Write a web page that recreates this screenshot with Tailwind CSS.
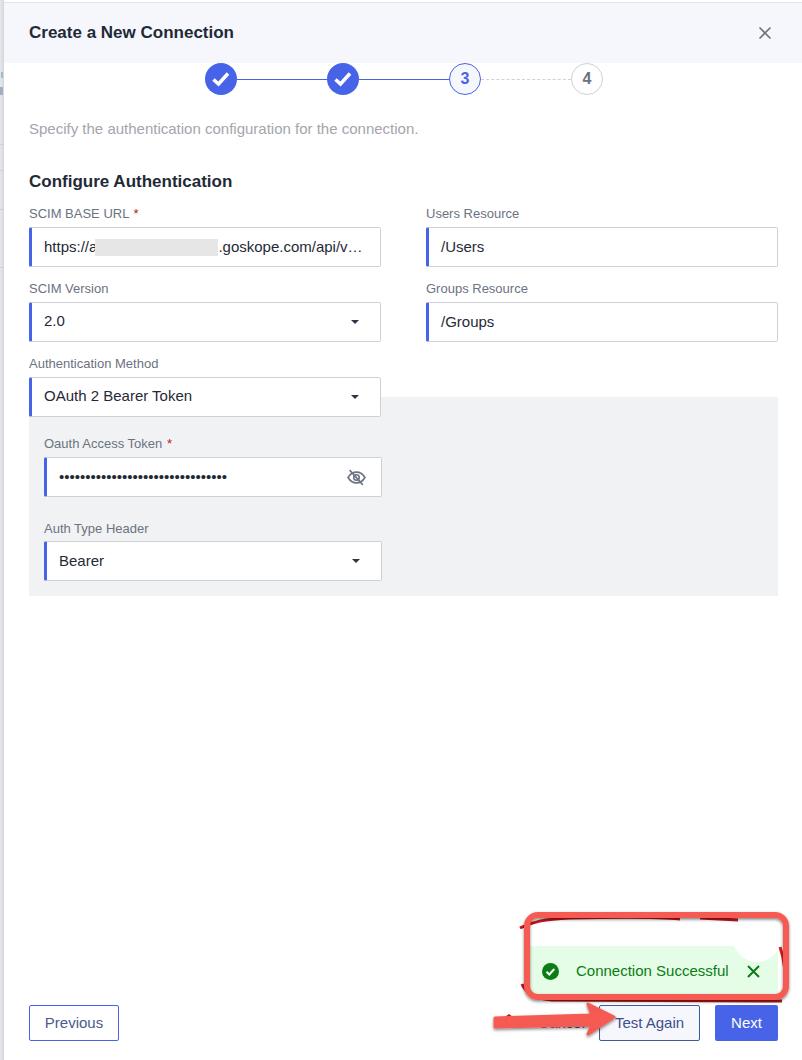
<!DOCTYPE html>
<html lang="en">
<head>
  <meta charset="UTF-8" />
  <title>Create a New Connection</title>
  <script src="https://cdn.jsdelivr.net/npm/@tailwindcss/browser@4"></script>
</head>
<body class="bg-white font-['Liberation_Sans',Arial,sans-serif] overflow-hidden">
  <div class="relative w-[802px] h-[1060px] overflow-hidden">
    <div class="flex h-full">
      <!-- page behind the drawer -->
      <div class="w-[4px] h-full bg-linear-to-r from-[#e6e7ea] to-[#d6d7dd] shrink-0 flex flex-col items-start pt-[72px]">
        <div class="ml-[1px] w-[2px] h-[6px] bg-[#9dbad0]"></div>
        <div class="mt-[9px] w-[3px] h-[8px] bg-[#a3aebf]"></div>
        <div class="mt-[49px] w-full h-px bg-[#cfd0d5]"></div>
        <div class="mt-[25px] w-full h-px bg-[#cfd0d5]"></div>
        <div class="mt-[38px] w-full h-px bg-[#cfd0d5]"></div>
        <div class="mt-[57px] w-full h-px bg-[#cfd0d5]"></div>
      </div>

      <div class="flex-1 flex flex-col pt-[2px] relative">
        <header class="h-[61px] shrink-0 bg-[#f6f7fc] border-t border-[#e3e4ea] flex items-center justify-between pl-[25px] pr-[30px]">
          <h2 class="text-[17px] font-bold text-[#1f2a37]">Create a New Connection</h2>
          <svg class="w-[14px] h-[14px] text-[#6b7280]" viewBox="0 0 14 14" fill="none" stroke="currentColor" stroke-width="1.6"><path d="M1.5 1.5l11 11M12.5 1.5l-11 11"/></svg>
        </header>

        <!-- stepper -->
        <div class="flex items-center justify-start pl-[201px] h-[32px] shrink-0">
          <div class="w-[32px] h-[32px] rounded-full bg-[#4764e9] flex items-center justify-center">
            <svg class="w-[18px] h-[16px]" viewBox="0 0 18 16" fill="none" stroke="#fff" stroke-width="3.500"><path d="M1.500 8.500l5 4.500L16 2.500"/></svg>
          </div>
          <div class="w-[90px] h-px bg-[#4764e9]"></div>
          <div class="w-[32px] h-[32px] rounded-full bg-[#4764e9] flex items-center justify-center">
            <svg class="w-[18px] h-[16px]" viewBox="0 0 18 16" fill="none" stroke="#fff" stroke-width="3.500"><path d="M1.500 8.500l5 4.500L16 2.500"/></svg>
          </div>
          <div class="w-[90px] h-px bg-[#4764e9]"></div>
          <div class="w-[32px] h-[32px] rounded-full border border-[#4764e9] bg-[#f6f7fc] flex items-center justify-center text-[16px] font-bold text-[#4764e9]">3</div>
          <div class="w-[90px] border-t border-dashed border-[#cfd1d6]"></div>
          <div class="w-[32px] h-[32px] rounded-full border border-[#cfd1d6] bg-white flex items-center justify-center text-[16px] font-bold text-[#6b7280]">4</div>
        </div>

        <div class="flex-1 pl-[25px] pr-[24px]">
          <p class="mt-[25px] text-[15px] leading-[18px] text-[#a3a6ad]">Specify the authentication configuration for the connection.</p>
          <h3 class="mt-[34px] text-[17px] leading-[20px] font-bold text-[#1f2a37]">Configure Authentication</h3>

          <div class="mt-[15px] grid grid-cols-[352px_352px] gap-x-[45px] gap-y-[15px]">
            <div>
              <label class="block h-[20px] text-[13px] leading-[13px] text-[#6b7280]">SCIM BASE URL <span class="ml-[1px] text-[#b42318]">*</span></label>
              <div class="h-[40px] bg-white border border-[#cfd1d6] border-l-[3px] border-l-[#4764e9] rounded-[2px] pl-[12px] flex items-center text-[15px] text-[#1f2a37]">https://a<span class="-ml-[2px] w-[123px] h-[17px] bg-[#e6e6e6] shrink-0"></span>.goskope.com/api/v…</div>
            </div>
            <div>
              <label class="block h-[20px] text-[13px] leading-[13px] text-[#6b7280]">Users Resource</label>
              <div class="h-[40px] bg-white border border-[#cfd1d6] border-l-[3px] border-l-[#4764e9] rounded-[2px] pl-[12px] flex items-center text-[15px] text-[#1f2a37]">/Users</div>
            </div>
            <div>
              <label class="block h-[20px] text-[13px] leading-[13px] text-[#6b7280]">SCIM Version</label>
              <div class="h-[40px] bg-white border border-[#cfd1d6] border-l-[3px] border-l-[#4764e9] rounded-[2px] pl-[12px] pr-[21px] pb-[1px] flex items-center justify-between text-[15px] text-[#1f2a37]">2.0<span class="w-0 h-0 mt-[1px] border-x-[4px] border-x-transparent border-t-[4px] border-t-[#2c3644]"></span></div>
            </div>
            <div>
              <label class="block h-[20px] text-[13px] leading-[13px] text-[#6b7280]">Groups Resource</label>
              <div class="h-[40px] bg-white border border-[#cfd1d6] border-l-[3px] border-l-[#4764e9] rounded-[2px] pl-[12px] flex items-center text-[15px] text-[#1f2a37]">/Groups</div>
            </div>
            <div class="relative z-10 col-span-2 w-[352px]">
              <label class="block h-[20px] text-[13px] leading-[13px] text-[#6b7280]">Authentication Method</label>
              <div class="h-[40px] bg-white border border-[#cfd1d6] border-l-[3px] border-l-[#4764e9] rounded-[2px] pl-[12px] pr-[21px] pb-[1px] flex items-center justify-between text-[15px] text-[#1f2a37]">OAuth 2 Bearer Token<span class="w-0 h-0 mt-[1px] border-x-[4px] border-x-transparent border-t-[4px] border-t-[#2c3644]"></span></div>
            </div>
          </div>

          <!-- grey panel sits behind the bottom of the select -->
          <div class="-mt-[20px] w-[749px] h-[199px] bg-[#f1f2f4] pl-[15px] pt-[39px]">
            <label class="block h-[21px] text-[13px] leading-[15px] text-[#6b7280]">Oauth Access Token <span class="ml-[1px] text-[#b42318]">*</span></label>
            <div class="w-[338px] h-[40px] bg-white border border-[#cfd1d6] border-l-[3px] border-l-[#4764e9] rounded-[2px] pl-[12px] pr-[15px] flex items-center justify-between text-[15px] text-[#1f2a37]">
              <span>••••••••••••••••••••••••••••••••</span>
              <svg class="w-[19px] h-[19px] text-[#6b7280]" viewBox="0 0 18 18" fill="none" stroke="currentColor" stroke-width="1.500"><path d="M1 9c2-3.400 4.800-5.100 8-5.100S15 5.600 17 9c-2 3.400-4.800 5.100-8 5.100S3 12.400 1 9z"/><circle cx="9" cy="9" r="2.600"/><path d="M2.500 2l12.500 14"/></svg>
            </div>
            <label class="block mt-[24px] h-[20px] text-[13px] leading-[15px] text-[#6b7280]">Auth Type Header</label>
            <div class="w-[338px] h-[40px] bg-white border border-[#cfd1d6] border-l-[3px] border-l-[#4764e9] rounded-[2px] pl-[12px] pr-[21px] flex items-center justify-between text-[15px] text-[#1f2a37]">Bearer<span class="w-0 h-0 border-x-[4px] border-x-transparent border-t-[4px] border-t-[#2c3644]"></span></div>
          </div>
        </div>

        <footer class="shrink-0 h-[55px] pl-[25px] pr-[24px] flex items-start justify-between">
          <button class="w-[90px] h-[36px] border border-[#4764e9] rounded-[2px] text-[15px] text-[#4a5a8c]">Previous</button>
          <div class="flex items-start">
            <button class="mr-[14px] h-[36px] text-[15px] text-[#3f4f8c]">Cancel</button>
            <button class="w-[101px] h-[36px] bg-[#f6f7fc] border border-[#3f5a9c] rounded-[2px] text-[15px] text-[#3f4f8c]">Test Again</button>
            <button class="ml-[15px] w-[63px] h-[36px] bg-[#4764e9] rounded-[2px] text-[15px] text-white">Next</button>
          </div>
        </footer>
      </div>
    </div>

    <!-- toast -->
    <div class="absolute left-[528px] top-[946px] w-[250px] h-[50px] bg-[#e5fce6] flex items-center pl-[14px] pt-[1px] text-[15px] text-[#0a7d14]">
      <svg class="w-[17px] h-[17px] mr-[17px] shrink-0" viewBox="0 0 17 17"><circle cx="8.500" cy="8.500" r="8.500" fill="#0a7d14"/><path d="M4.500 8.800l2.800 2.700 5-5.500" fill="none" stroke="#fff" stroke-width="2"/></svg>
      <span class="whitespace-nowrap">Connection Successful</span>
      <svg class="w-[13px] h-[13px] ml-[18px] shrink-0" viewBox="0 0 13 13" fill="none" stroke="#0a7d14" stroke-width="2"><path d="M1 1l11 11M12 1L1 12"/></svg>
    </div>

    <!-- red hand-drawn annotation -->
    <svg class="absolute left-0 top-0 pointer-events-none" width="802" height="1060" viewBox="0 0 802 1060" fill="none">
      <defs>
        <filter id="sh" x="-10%" y="-10%" width="120%" height="130%"><feDropShadow dx="0" dy="1.500" stdDeviation="1.500" flood-color="#000" flood-opacity="0.5"/></filter>
      </defs>
      <circle cx="757" cy="938" r="24" fill="#fff"/>
      <path d="M520 928c12-6 24-9 50-10 40-1 90-1 110 1M700 918l38 2" stroke="#c8141c" stroke-width="3"/>
      <path d="M780 947c5 14 6 28 5 46" stroke="#d11f1f" stroke-width="3"/>
      <path d="M522 984c4 10 14 15 30 16l230 1" stroke="#b81a1a" stroke-width="3"/>
      <path d="M505 1017l4-3 4 3zM583 1016l8-3 6 3z" fill="#c8141c"/>
      <rect x="527" y="915" width="259" height="82" rx="11" stroke="#f55a52" stroke-width="6" filter="url(#sh)"/>
      <path d="M495 1018l97-3-4-11 26 13-26 17 4-9-97 2z" fill="#f55a52" stroke="#f55a52" stroke-width="3" stroke-linejoin="round" filter="url(#sh)"/>
    </svg>
  </div>
</body>
</html>
